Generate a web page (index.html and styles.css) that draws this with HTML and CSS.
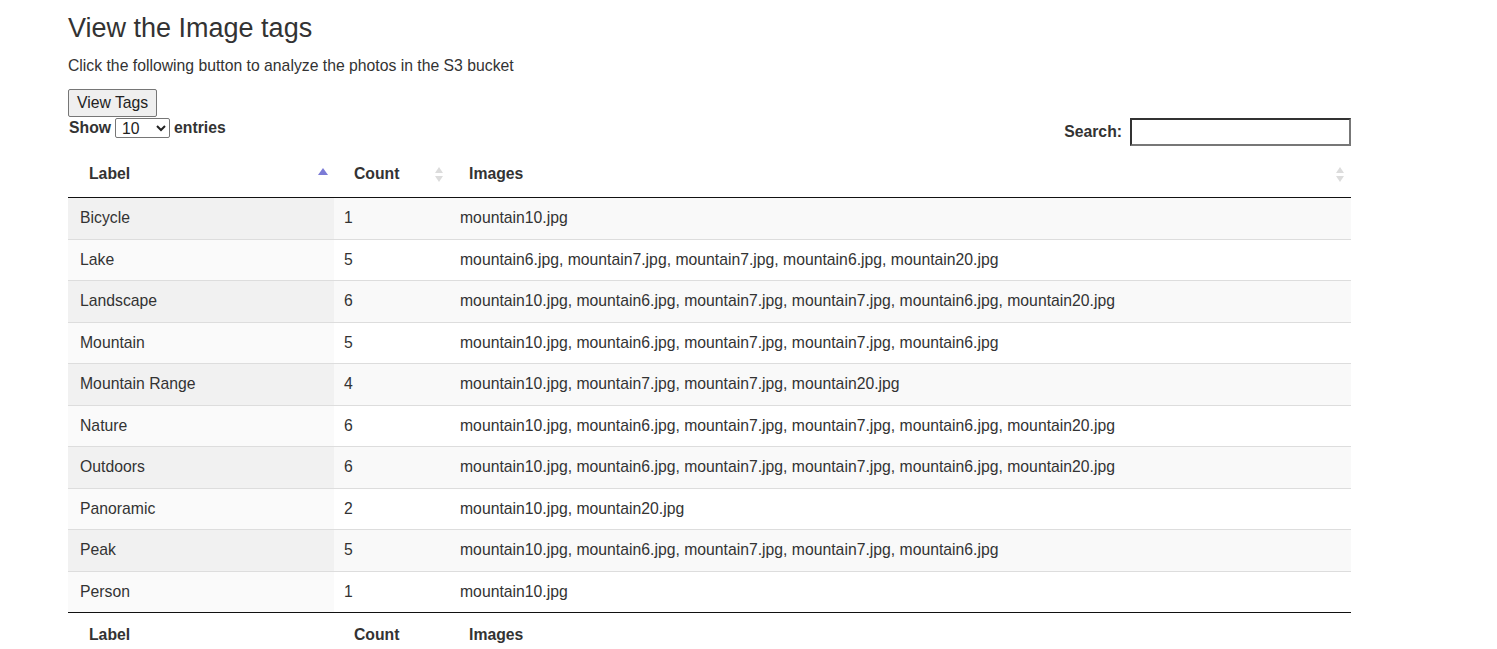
FILE: index.html
```html
<!DOCTYPE html>
<html>
<head>
<meta charset="utf-8">
<link rel="stylesheet" href="styles.css">
</head>
<body>
<div class="page">
  <h2 class="title">View the Image tags</h2>
  <p class="intro">Click the following button to analyze the photos in the S3 bucket</p>
  <button class="btn">View Tags</button>
  <div class="controls">
    <label class="length">Show <select class="sel"><option>10</option><option>25</option></select> entries</label>
    <label class="filter">Search: <input class="search" type="search"></label>
  </div>
  <table class="tbl">
    <colgroup><col class="c1"><col class="c2"><col class="c3"></colgroup>
    <thead>
      <tr>
        <th class="sort asc">Label</th>
        <th class="sort both">Count</th>
        <th class="sort both">Images</th>
      </tr>
    </thead>
    <tbody>
      <tr><td>Bicycle</td><td>1</td><td>mountain10.jpg</td></tr>
      <tr><td>Lake</td><td>5</td><td>mountain6.jpg, mountain7.jpg, mountain7.jpg, mountain6.jpg, mountain20.jpg</td></tr>
      <tr><td>Landscape</td><td>6</td><td>mountain10.jpg, mountain6.jpg, mountain7.jpg, mountain7.jpg, mountain6.jpg, mountain20.jpg</td></tr>
      <tr><td>Mountain</td><td>5</td><td>mountain10.jpg, mountain6.jpg, mountain7.jpg, mountain7.jpg, mountain6.jpg</td></tr>
      <tr><td>Mountain Range</td><td>4</td><td>mountain10.jpg, mountain7.jpg, mountain7.jpg, mountain20.jpg</td></tr>
      <tr><td>Nature</td><td>6</td><td>mountain10.jpg, mountain6.jpg, mountain7.jpg, mountain7.jpg, mountain6.jpg, mountain20.jpg</td></tr>
      <tr><td>Outdoors</td><td>6</td><td>mountain10.jpg, mountain6.jpg, mountain7.jpg, mountain7.jpg, mountain6.jpg, mountain20.jpg</td></tr>
      <tr><td>Panoramic</td><td>2</td><td>mountain10.jpg, mountain20.jpg</td></tr>
      <tr><td>Peak</td><td>5</td><td>mountain10.jpg, mountain6.jpg, mountain7.jpg, mountain7.jpg, mountain6.jpg</td></tr>
      <tr><td>Person</td><td>1</td><td>mountain10.jpg</td></tr>
    </tbody>
    <tfoot>
      <tr><th>Label</th><th>Count</th><th>Images</th></tr>
    </tfoot>
  </table>
</div>
</body>
</html>
```
FILE: styles.css
```css
html, body {
  margin: 0;
  padding: 0;
  background: #fff;
}
body {
  font-family: "Liberation Sans", Arial, sans-serif;
  font-size: 15.75px;
  color: #333;
}
.page {
  width: 1283px;
  margin-left: 68px;
}
.title {
  margin: 0;
  padding-top: 12px;
  font-size: 27px;
  font-weight: normal;
  line-height: 32px;
}
.intro {
  margin: 12px 0 0 0;
  font-size: 15.75px;
  line-height: 20px;
}
.btn {
  margin-top: 13px;
  height: 28px;
  padding: 0 8px;
  font-family: "Liberation Sans", Arial, sans-serif;
  font-size: 15.75px;
  color: #222;
  background: #efefef;
  border: 1px solid #767676;
  border-radius: 2px;
  display: block;
}
.controls {
  display: flex;
  justify-content: space-between;
  align-items: flex-start;
  height: 33px;
}
.length {
  font-weight: bold;
  padding-top: 1px;
  display: flex;
  align-items: center;
  gap: 4px;
  padding-left: 1px;
}
.sel {
  width: 55px;
  height: 20px;
  font-family: "Liberation Sans", Arial, sans-serif;
  font-size: 15.75px;
  color: #222;
  border: 1px solid #767676;
  border-radius: 2px;
  background: #fff;
  padding: 0 0 0 2px;
}
.filter {
  font-weight: bold;
  display: flex;
  align-items: center;
  gap: 8px;
  padding-top: 1px;
}
.search {
  width: 221px;
  height: 28px;
  box-sizing: border-box;
  border: 2px solid #333;
  border-right-color: #777;
  border-bottom-color: #777;
  padding: 0 4px;
  margin: 0;
}
.tbl {
  width: 1283px;
  border-collapse: separate;
  border-spacing: 0;
  table-layout: fixed;
}
.c1 { width: 266px; }
.c2 { width: 116px; }
.c3 { width: 901px; }
.tbl th {
  text-align: left;
  font-weight: bold;
  padding: 10px 18px 10px 21px;
  line-height: 27px;
}
.tbl th:nth-child(2) { padding-left: 20px; }
.tbl th:nth-child(3) { padding-left: 19px; }
.tbl thead th {
  border-bottom: 1px solid #111;
  position: relative;
}
.tbl tfoot th {
  border-top: 1px solid #111;
  padding-top: 8px;
  padding-bottom: 6px;
}
.tbl td {
  padding: 8px 10px;
  line-height: 24.5px;
  border-top: 1px solid #ddd;
  white-space: nowrap;
}
.tbl td:first-child {
  padding-left: 12px;
}
.tbl tbody tr:first-child td {
  border-top: none;
  padding-bottom: 8px;
}
.tbl tbody tr:nth-child(odd) td { background: #f9f9f9; }
.tbl tbody tr:nth-child(odd) td:first-child { background: #f1f1f1; }
.tbl tbody tr:nth-child(even) td:first-child { background: #fafafa; }
.sort::before,
.sort::after {
  position: absolute;
  content: "";
  width: 0;
  height: 0;
  border-left: 4px solid transparent;
  border-right: 4px solid transparent;
}
.asc::before {
  right: 6px;
  top: 18px;
  border-left-width: 5px;
  border-right-width: 5px;
  border-bottom: 7px solid #7b7bd6;
}
.asc::after {
  display: none;
}
.both::before {
  right: 7px;
  top: 17px;
  border-bottom: 6px solid #dcdcdc;
}
.both::after {
  right: 7px;
  top: 26px;
  border-top: 6px solid #dcdcdc;
}
```
